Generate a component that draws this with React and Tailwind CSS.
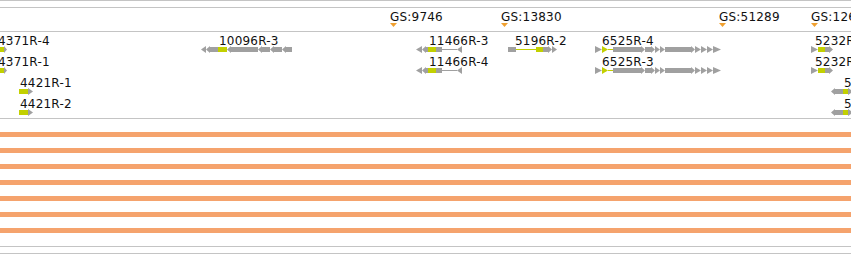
const GRAY = "#a0a0a0";
const LIME = "#c2d000";
const ORANGE = "#f5a36d";

// glyph pieces, x in page pixels
const g4371 = [
  { t: "b", x: 0, w: 4, c: "y" },
  { t: "r", x: 4, w: 3 },
];
const g4421 = [
  { t: "b", x: 19, w: 9, c: "y" },
  { t: "r", x: 28, w: 5 },
];
const g10096 = [
  { t: "l", x: 201, w: 5 },
  { t: "lb", x: 206, w: 12 },
  { t: "b", x: 218, w: 9, c: "y" },
  { t: "lb", x: 227, w: 31 },
  { t: "lb", x: 258, w: 12 },
  { t: "lb", x: 270, w: 12 },
  { t: "lb", x: 282, w: 10 },
];
const g11466 = [
  { t: "l", x: 416, w: 6 },
  { t: "lb", x: 422, w: 6 },
  { t: "b", x: 428, w: 8, c: "y" },
  { t: "b", x: 436, w: 6 },
  { t: "line", x: 442, w: 15 },
  { t: "l", x: 457, w: 5 },
];
const g5196 = [
  { t: "b", x: 508, w: 8 },
  { t: "line", x: 516, w: 20, c: "y" },
  { t: "b", x: 536, w: 7, c: "y" },
  { t: "rb", x: 543, w: 9 },
  { t: "r", x: 552, w: 5 },
];
const g6525 = [
  { t: "r", x: 595, w: 7 },
  { t: "r", x: 602, w: 6, c: "y" },
  { t: "line", x: 608, w: 5, c: "y" },
  { t: "rb", x: 613, w: 32 },
  { t: "rb", x: 645, w: 10 },
  { t: "r", x: 655, w: 5 },
  { t: "r", x: 660, w: 5 },
  { t: "rb", x: 665, w: 30 },
  { t: "r", x: 695, w: 6 },
  { t: "r", x: 701, w: 6 },
  { t: "r", x: 707, w: 6 },
  { t: "r", x: 713, w: 8 },
];
const g5232 = [
  { t: "r", x: 811, w: 7 },
  { t: "b", x: 818, w: 7, c: "y" },
  { t: "rb", x: 825, w: 8 },
];
const g5right = [
  { t: "lb", x: 831, w: 12 },
  { t: "b", x: 843, w: 5, c: "y" },
  { t: "r", x: 848, w: 5 },
];

const rows = [
  {
    labels: [
      { x: -2, t: "4371R-4" },
      { x: 219, t: "10096R-3" },
      { x: 429, t: "11466R-3" },
      { x: 515, t: "5196R-2" },
      { x: 602, t: "6525R-4" },
      { x: 815, t: "5232R-1" },
    ],
    glyphs: [...g4371, ...g10096, ...g11466, ...g5196, ...g6525, ...g5232],
  },
  {
    labels: [
      { x: -2, t: "4371R-1" },
      { x: 429, t: "11466R-4" },
      { x: 602, t: "6525R-3" },
      { x: 815, t: "5232R-2" },
    ],
    glyphs: [...g4371, ...g11466, ...g6525, ...g5232],
  },
  {
    labels: [
      { x: 20, t: "4421R-1" },
      { x: 844, t: "5231R-1" },
    ],
    glyphs: [...g4421, ...g5right],
  },
  {
    labels: [
      { x: 20, t: "4421R-2" },
      { x: 844, t: "5231R-2" },
    ],
    glyphs: [...g4421, ...g5right],
  },
];

const markers = [
  { x: 390, t: "GS:9746" },
  { x: 501, t: "GS:13830" },
  { x: 719, t: "GS:51289" },
  { x: 811, t: "GS:12654" },
];

function Piece({ s }) {
  const { t, x, w } = s;
  const fill = s.c === "y" ? LIME : GRAY;
  const x2 = x + w;
  if (t === "b") return <rect x={x} y={1} width={w} height={5} fill={fill} />;
  if (t === "line") return <rect x={x} y={3} width={w} height={1} fill={fill} />;
  if (t === "r") return <polygon points={`${x},0 ${x2},3.5 ${x},7`} fill={fill} />;
  if (t === "l") return <polygon points={`${x2},0 ${x},3.5 ${x2},7`} fill={fill} />;
  if (t === "rb")
    return (
      <polygon
        points={`${x},1 ${x2 - 4},1 ${x2 - 4},0 ${x2},3.5 ${x2 - 4},7 ${x2 - 4},6 ${x},6`}
        fill={fill}
      />
    );
  return (
    <polygon
      points={`${x2},1 ${x + 4},1 ${x + 4},0 ${x},3.5 ${x + 4},7 ${x + 4},6 ${x2},6`}
      fill={fill}
    />
  );
}

function FeatureRow({ row }) {
  return (
    <div className="relative h-[21px]">
      {row.labels.map((l) => (
        <span
          key={l.t + l.x}
          className="absolute top-[2px] leading-[14px] whitespace-nowrap tracking-[0.2px]"
          style={{ left: l.x }}
        >
          {l.t}
        </span>
      ))}
      <svg className="absolute left-0 top-[14px]" width="851" height="7">
        {row.glyphs.map((s, i) => (
          <Piece key={i} s={s} />
        ))}
      </svg>
    </div>
  );
}

export default function App() {
  return (
    <div
      className="w-[851px] h-[254px] overflow-hidden bg-white text-[12px] text-[#111]"
      style={{ fontFamily: '"DejaVu Sans", sans-serif' }}
    >
      <div className="h-[7px] border-t border-[#c4c4c4]" />

      {/* position ruler */}
      <div className="relative h-[25px] border-t border-b border-[#c4c4c4]">
        {markers.map((m) => (
          <div
            key={m.t}
            className="absolute top-[2px] flex flex-col items-start"
            style={{ left: m.x }}
          >
            <span className="leading-[14px] whitespace-nowrap tracking-[0.2px]">{m.t}</span>
            <svg className="-mt-[1px]" width="7" height="4">
              <polygon points="0,0 7,0 3.5,4" fill="#f0a030" />
            </svg>
          </div>
        ))}
      </div>

      {/* gene features */}
      <div className="h-[87px] border-b border-[#c4c4c4] flex flex-col">
        {rows.map((r, i) => (
          <FeatureRow key={i} row={r} />
        ))}
      </div>

      {/* coverage bars */}
      <div className="flex flex-col gap-[11px] pt-[13px] pb-[13px] border-b border-[#c4c4c4]">
        {[0, 1, 2, 3, 4, 5, 6].map((i) => (
          <div key={i} className="h-[5px]" style={{ backgroundColor: ORANGE }} />
        ))}
      </div>
      <div className="h-[7px] border-b border-[#c4c4c4]" />
    </div>
  );
}
